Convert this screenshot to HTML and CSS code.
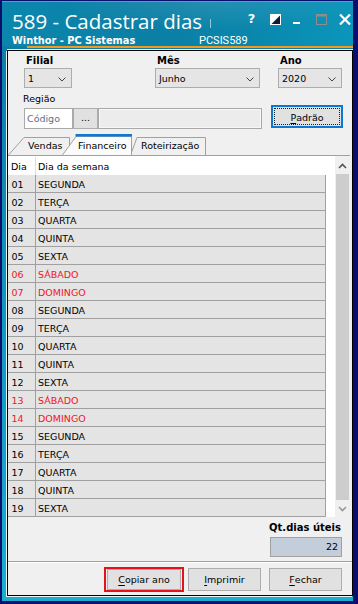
FILE: index.html
```html
<!DOCTYPE html>
<html lang="pt-BR">
<head>
<meta charset="utf-8">
<title>589 - Cadastrar dias</title>
<link rel="stylesheet" href="styles.css">
</head>
<body>
<div class="window">
  <div class="titlebar">
    <div class="tb-text">
      <div class="title">589 - Cadastrar dias<span class="caret"></span></div>
      <div class="subtitle"><span class="app">Winthor - PC Sistemas</span><span class="code">PCSIS589</span></div>
    </div>
    <div class="tb-icons">
      <span class="ic-help">?</span>
      <svg class="ic-sq" width="11" height="11" viewBox="0 0 11 11"><rect x="0" y="0" width="11" height="11" fill="#fff"/><polygon points="10,1.5 10,10 1.5,10" fill="#0b1c3a"/></svg>
      <svg class="ic-min" width="7" height="11" viewBox="0 0 7 11"><rect x="0" y="8" width="7" height="2" fill="#fff"/></svg>
      <svg class="ic-max" width="11" height="11" viewBox="0 0 11 11"><rect x="0.5" y="0.5" width="10" height="10" fill="none" stroke="#8d8d8d"/><rect x="0" y="0" width="11" height="2.5" fill="#8d8d8d"/></svg>
      <svg class="ic-close" width="12" height="11" viewBox="0 0 12 11"><path d="M1 0.5 L11 10.5 M11 0.5 L1 10.5" stroke="#fff" stroke-width="2.2"/></svg>
    </div>
  </div>
  <div class="accent"></div>
  <div class="panel">
    <div class="filters">
      <div class="field w-filial">
        <div class="lbl">Filial</div>
        <div class="select">1<svg class="chev" width="8" height="5" viewBox="0 0 8 5"><path d="M0.5 0.5 L4 4 L7.5 0.5" fill="none" stroke="#444" stroke-width="1"/></svg></div>
      </div>
      <div class="field w-mes">
        <div class="lbl">Mês</div>
        <div class="select">Junho<svg class="chev" width="8" height="5" viewBox="0 0 8 5"><path d="M0.5 0.5 L4 4 L7.5 0.5" fill="none" stroke="#444" stroke-width="1"/></svg></div>
      </div>
      <div class="field w-ano">
        <div class="lbl">Ano</div>
        <div class="select">2020<svg class="chev" width="8" height="5" viewBox="0 0 8 5"><path d="M0.5 0.5 L4 4 L7.5 0.5" fill="none" stroke="#444" stroke-width="1"/></svg></div>
      </div>
    </div>
    <div class="regiao-lbl">Região</div>
    <div class="regiao-row">
      <div class="input code-input">Código</div>
      <div class="btn dots">...</div>
      <div class="input wide"></div>
      <div class="btn padrao"><span class="focus"><u>P</u>adrão</span></div>
    </div>
    <div class="tabs">
      <div class="tab t-vendas">
        <svg class="tab-shape" width="62" height="18" viewBox="0 0 62 18"><path d="M0.5 18 L16 0.5 L61.5 0.5 L61.5 18" fill="#f0f0f0" stroke="#a0a0a0"/></svg>
        <span class="tab-label">Vendas</span>
      </div>
      <div class="tab t-fin">
        <svg class="tab-shape" width="70" height="21" viewBox="0 0 70 21"><path d="M0.5 21 L14 2.5 L69.5 2.5 L69.5 21" fill="#fbfbfb" stroke="#a0a0a0"/><rect x="13.5" y="0" width="56.5" height="2.5" fill="#0a78d4"/></svg>
        <span class="tab-label">Financeiro</span>
      </div>
      <div class="tab t-rot">
        <svg class="tab-shape" width="76" height="18" viewBox="0 0 76 18"><path d="M0.5 18 L7 0.5 L75.5 0.5 L75.5 18" fill="#f0f0f0" stroke="#a0a0a0"/></svg>
        <span class="tab-label">Roteirização</span>
      </div>
    </div>
    <div class="tabpage">
      <div class="grid">
        <div class="grid-main">
          <div class="grid-head"><div class="c1">Dia</div><div class="c2">Dia da semana</div></div>
          <div class="row"><div class="c1">01</div><div class="c2">SEGUNDA</div></div>
          <div class="row"><div class="c1">02</div><div class="c2">TERÇA</div></div>
          <div class="row"><div class="c1">03</div><div class="c2">QUARTA</div></div>
          <div class="row"><div class="c1">04</div><div class="c2">QUINTA</div></div>
          <div class="row"><div class="c1">05</div><div class="c2">SEXTA</div></div>
          <div class="row weekend"><div class="c1">06</div><div class="c2">SÁBADO</div></div>
          <div class="row weekend"><div class="c1">07</div><div class="c2">DOMINGO</div></div>
          <div class="row"><div class="c1">08</div><div class="c2">SEGUNDA</div></div>
          <div class="row"><div class="c1">09</div><div class="c2">TERÇA</div></div>
          <div class="row"><div class="c1">10</div><div class="c2">QUARTA</div></div>
          <div class="row"><div class="c1">11</div><div class="c2">QUINTA</div></div>
          <div class="row"><div class="c1">12</div><div class="c2">SEXTA</div></div>
          <div class="row weekend"><div class="c1">13</div><div class="c2">SÁBADO</div></div>
          <div class="row weekend"><div class="c1">14</div><div class="c2">DOMINGO</div></div>
          <div class="row"><div class="c1">15</div><div class="c2">SEGUNDA</div></div>
          <div class="row"><div class="c1">16</div><div class="c2">TERÇA</div></div>
          <div class="row"><div class="c1">17</div><div class="c2">QUARTA</div></div>
          <div class="row"><div class="c1">18</div><div class="c2">QUINTA</div></div>
          <div class="row"><div class="c1">19</div><div class="c2">SEXTA</div></div>
        </div>
        <div class="scrollbar">
          <div class="sb-btn up"><svg width="9" height="6" viewBox="0 0 9 6"><path d="M1 5 L4.5 1.5 L8 5" fill="none" stroke="#555" stroke-width="1.6"/></svg></div>
          <div class="sb-thumb"></div>
          <div class="sb-btn down"><svg width="9" height="6" viewBox="0 0 9 6"><path d="M1 1 L4.5 4.5 L8 1" fill="none" stroke="#9a9a9a" stroke-width="1.6"/></svg></div>
        </div>
      </div>
      <div class="totals">
        <div class="tot-lbl">Qt.dias úteis</div>
        <div class="tot-input">22</div>
      </div>
    </div>
    <div class="actions">
      <div class="highlight"><div class="btn act"><u>C</u>opiar ano</div></div>
      <div class="btn act"><u>I</u>mprimir</div>
      <div class="btn act fechar"><u>F</u>echar</div>
    </div>
  </div>
</div>
</body>
</html>
```

FILE: styles.css
```css
html, body {
  margin: 0;
  padding: 0;
}
body {
  font-family: "DejaVu Sans", sans-serif;
  font-size: 9.5px;
  color: #000;
}
.window {
  width: 358px;
  height: 604px;
  box-sizing: border-box;
  border-style: solid;
  border-color: #0a0f6e;
  border-width: 1px 5px 3px 2px;
  background: linear-gradient(to bottom, #0b7aa0 0%, #1196bd 50%, #19aed0 100%);
  display: flex;
  flex-direction: column;
  overflow: hidden;
}
.titlebar {
  height: 45px;
  flex: none;
  display: flex;
  justify-content: space-between;
  border-top: 1px solid #3fa6d6;
  box-sizing: border-box;
  background:
    radial-gradient(ellipse 220px 40px at 60% 0%, rgba(255,255,255,0.10), rgba(255,255,255,0) 70%),
    linear-gradient(100deg, #0a87ad 0%, #0c7fa5 45%, #0a86ac 70%, #0c96bb 100%);
}
.tb-text {
  padding: 7px 0 0 10px;
  color: #fff;
}
.title {
  font-family: "Open Sans", sans-serif;
  font-size: 20.5px;
  line-height: 24px;
  display: flex;
  align-items: center;
  white-space: nowrap;
}
.caret {
  display: inline-block;
  width: 1px;
  height: 9px;
  background: rgba(255,255,255,0.55);
  margin: 4px 0 0 8px;
}
.subtitle {
  display: flex;
  margin-top: 1px;
  line-height: 13px;
  white-space: nowrap;
}
.app {
  font-weight: bold;
  font-size: 9.8px;
  width: 187px;
}
.code {
  font-family: Roboto, sans-serif;
  font-size: 11px;
}
.tb-icons {
  display: flex;
  align-items: flex-start;
  padding: 11px 5px 0 0;
}
.ic-help {
  font-weight: bold;
  font-size: 13px;
  line-height: 12px;
  color: #fff;
  width: 8px;
  margin-right: 14px;
}
.ic-sq { margin: 1px 12px 0 0; }
.ic-min { margin: 1px 16px 0 0; }
.ic-max { margin: 1px 12px 0 0; }
.ic-close { margin-top: 1px; }

.accent {
  height: 2px;
  flex: none;
  margin-left: 25px;
  background: #f39a1e;
}
.panel {
  flex: none;
  height: 546px;
  box-sizing: border-box;
  margin: 2px 0 0 5px;
  border: 1px solid #000;
  box-shadow: -1px 1px 0 #e8f4f8, 0 -1px 0 #e8f4f8;
  background: #f0f0f0;
  display: flex;
  flex-direction: column;
}
.filters {
  display: flex;
  padding: 3px 0 0 16px;
}
.field { display: flex; flex-direction: column; }
.w-filial { width: 48px; margin-right: 83px; }
.w-mes { width: 105px; margin-right: 18px; }
.w-ano { width: 64px; }
.lbl {
  font-weight: bold;
  font-size: 10px;
  line-height: 14px;
  padding-left: 2px;
}
.select {
  height: 20px;
  box-sizing: border-box;
  border: 1px solid #adadad;
  background: #e5e5e5;
  display: flex;
  align-items: center;
  justify-content: space-between;
  padding: 1px 5px 0 3px;
}
.chev { margin-top: 1px; }
.regiao-lbl {
  font-size: 9.5px;
  line-height: 13px;
  margin: 4px 0 0 15px;
}
.regiao-row {
  display: flex;
  align-items: flex-start;
  height: 24px;
  padding-left: 16px;
}
.input {
  box-sizing: border-box;
  height: 21px;
  margin-top: 3px;
  border: 1px solid #a9a9a9;
}
.code-input {
  width: 49px;
  background: #fff;
  color: #60708c;
  line-height: 19px;
  padding-left: 2px;
}
.wide {
  width: 164px;
  background: #ececec;
  box-shadow: inset 0 0 0 1px #f7f7f7;
}
.btn {
  box-sizing: border-box;
  background: #e1e1e1;
  border: 1px solid #adadad;
  display: flex;
  align-items: center;
  justify-content: center;
}
.dots {
  width: 25px;
  height: 21px;
  margin-top: 3px;
  padding-bottom: 2px;
}
.padrao {
  width: 72px;
  height: 23px;
  margin-left: 9px;
  border: 2px solid #0a78d4;
  padding: 1px;
}
.padrao .focus {
  flex: 1;
  align-self: stretch;
  border: 1px dotted #222;
  display: flex;
  align-items: center;
  justify-content: center;
  padding-top: 1px;
}
.tabs {
  display: flex;
  align-items: flex-end;
  height: 21px;
  margin-top: 5px;
}
.tab {
  position: relative;
  height: 18px;
  line-height: 18px;
}
.tab-shape {
  position: absolute;
  left: 0;
  bottom: 0;
}
.tab-label {
  position: relative;
  white-space: nowrap;
}
.t-vendas { width: 62px; padding-left: 20px; box-sizing: border-box; z-index: 1; }
.t-fin {
  width: 70px;
  height: 21px;
  box-sizing: border-box;
  padding: 3px 0 0 16px;
  margin-left: -8px;
  z-index: 3;
}
.t-rot { width: 76px; padding-left: 11px; box-sizing: border-box; margin-left: -2px; z-index: 2; }

.tabpage {
  height: 407px;
  box-sizing: border-box;
  border-bottom: 1px solid #a0a0a0;
  box-shadow: 0 1px 0 #fff;
  display: flex;
  flex-direction: column;
}
.grid {
  display: flex;
  border-top: 1px solid #a0a0a0;
  background: #fff;
  width: 342px;
  height: 362px;
  box-sizing: border-box;
}
.grid-main {
  width: 327px;
}
.grid-head {
  display: flex;
  height: 19px;
  line-height: 19px;
  padding-top: 1px;
  box-sizing: border-box;
}
.grid-head .c1 { width: 28px; padding-left: 3px; border-right: 1px solid #dcdcdc; box-sizing: border-box; }
.grid-head .c2 { padding-left: 2px; }
.row {
  display: flex;
  width: 318px;
  height: 18px;
  box-sizing: border-box;
  border-bottom: 1px solid #a0a0a0;
  background: #e4e4e4;
  line-height: 15px;
  padding-top: 2px;
}
.row .c1 {
  width: 28px;
  box-sizing: border-box;
  padding-left: 3.5px;
  border-right: 1px solid #a0a0a0;
  margin-top: -2px;
  padding-top: 2px;
}
.row .c2 {
  flex: 1;
  padding-left: 2px;
  border-right: 1px solid #a0a0a0;
  margin-top: -2px;
  padding-top: 2px;
}
.row.weekend { color: #f2151d; }
.scrollbar {
  width: 15px;
  display: flex;
  flex-direction: column;
  background: #f0f0f0;
}
.sb-btn {
  display: flex;
  align-items: center;
  justify-content: center;
}
.sb-btn.up { height: 18px; padding-top: 2px; box-sizing: border-box; }
.sb-btn.down { height: 17px; }
.sb-thumb {
  flex: 1;
  background: #cdcdcd;
  margin: 0 1px;
}
.totals {
  display: flex;
  flex-direction: column;
  align-items: flex-end;
  padding: 4px 10px 0 0;
}
.tot-lbl {
  font-weight: bold;
  font-size: 10px;
  line-height: 13px;
  margin-right: 1px;
}
.tot-input {
  margin-top: 3px;
  width: 72px;
  height: 20px;
  box-sizing: border-box;
  border: 1px solid #a0a0a0;
  background: #c3ceda;
  text-align: right;
  line-height: 18px;
  padding-right: 3px;
}
.actions {
  flex: 1;
  display: flex;
  align-items: center;
  justify-content: flex-end;
  padding: 1px 10px 0 0;
}
.highlight {
  border: 2px solid #e8101a;
  padding: 0 1px;
  height: 25px;
  box-sizing: border-box;
  display: flex;
  align-items: center;
  margin-right: 4px;
}
.btn.act {
  width: 73px;
  height: 23px;
  padding-top: 1px;
}
.highlight .btn.act {
  width: 74px;
  height: 21px;
}
.fechar { margin-left: 8px; }
u { text-decoration: underline; text-underline-offset: 2px; }
```
